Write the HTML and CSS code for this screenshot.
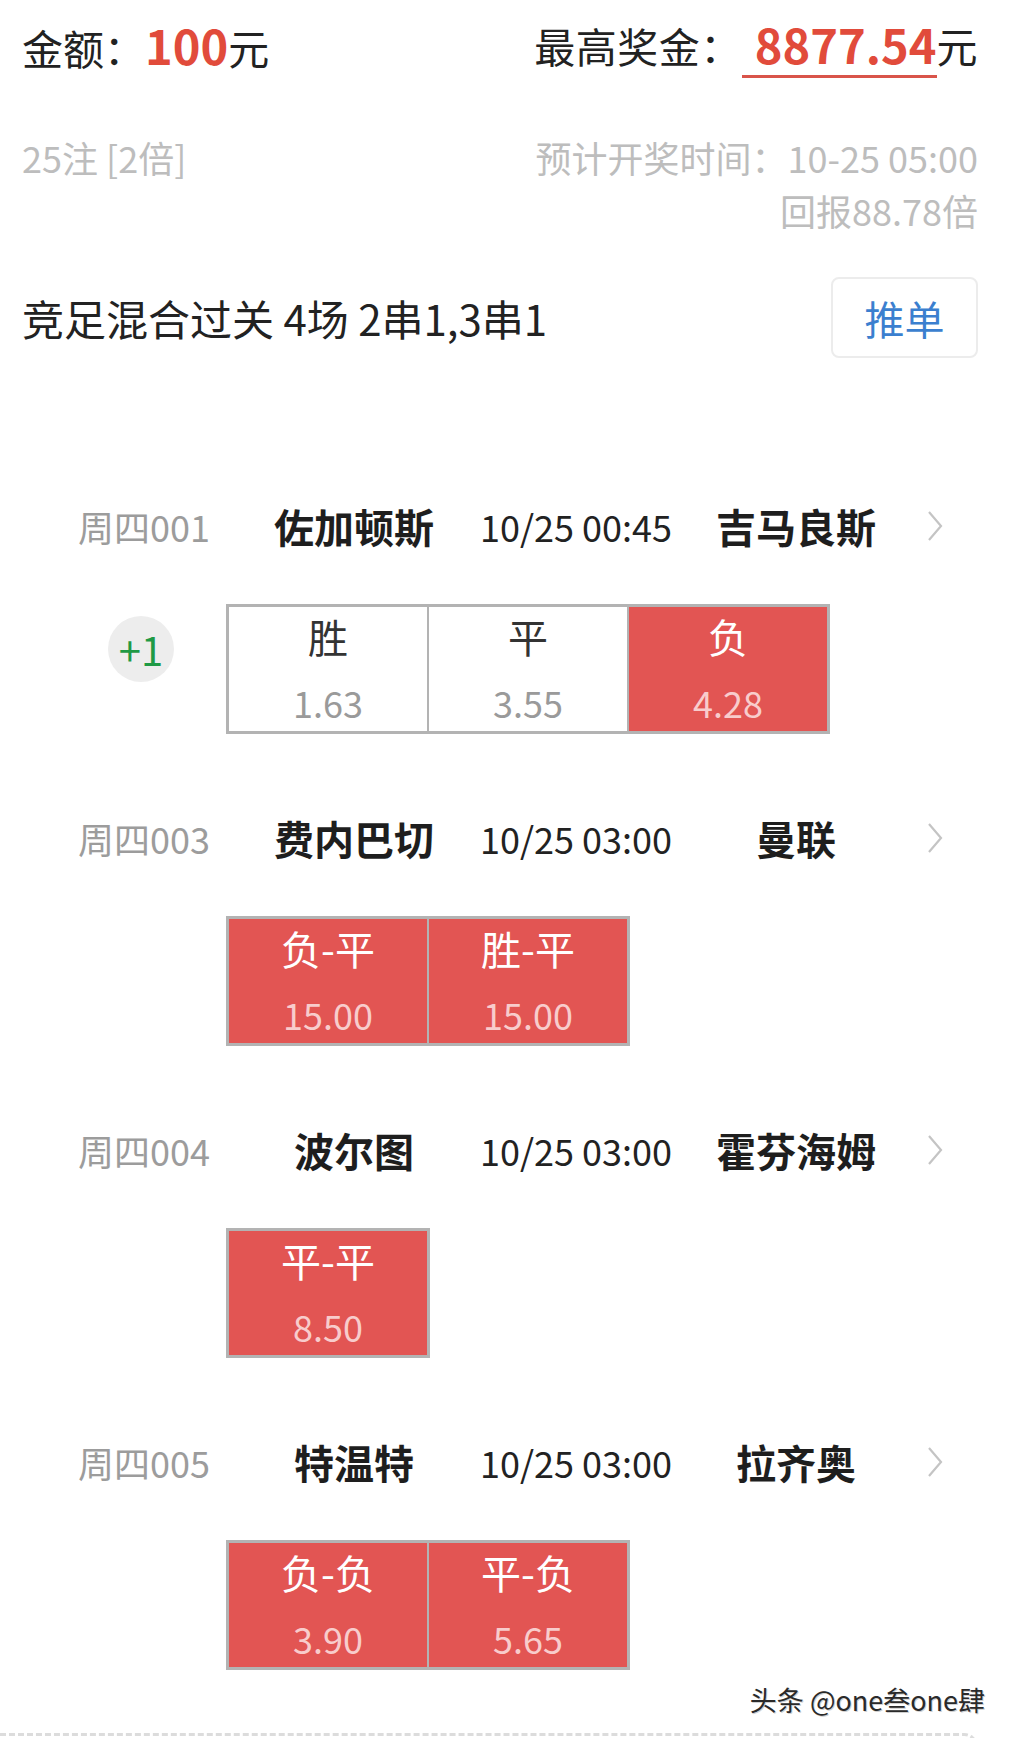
FILE: index.html
```html
<!DOCTYPE html>
<html lang="zh-CN">
  <head>
    <meta charset="UTF-8" />
    <title>方案详情</title>
    <link rel="stylesheet" href="styles.css">
  </head>
  <body>
    <!-- Summary -->
    <div class="summary">
      <div class="top-row">
        <div class="amount">金额：<span class="money">100</span>元</div>
        <div class="prize">最高奖金：<span class="prize-value">8877.54</span>元</div>
      </div>

      <div class="meta">
        <div>25注 [2倍]</div>
        <div class="meta-right">
          <div>预计开奖时间：10-25 05:00</div>
          <div>回报88.78倍</div>
        </div>
      </div>

      <div class="title-row">
        <div class="title">竞足混合过关 4场 2串1,3串1</div>
        <div class="push-btn">推单</div>
      </div>
    </div>

    <!-- Matches -->
    <div class="matches">
      <div class="match">
        <div class="match-head">
          <span class="match-no">周四001</span>
          <span class="team">佐加顿斯</span>
          <span class="kickoff">10/25 00:45</span>
          <span class="team">吉马良斯</span>
          <svg class="chevron" width="18" height="34" viewBox="0 0 18 34"><polyline points="3,3 15,17 3,31" /></svg>
        </div>
        <div class="pick-row">
          <div class="gutter"><span class="plus">+1</span></div>
          <div class="odds">
            <div class="cell"><div class="pick">胜</div><div class="rate">1.63</div></div>
            <div class="cell"><div class="pick">平</div><div class="rate">3.55</div></div>
            <div class="cell on"><div class="pick">负</div><div class="rate">4.28</div></div>
          </div>
        </div>
      </div>

      <div class="match">
        <div class="match-head">
          <span class="match-no">周四003</span>
          <span class="team">费内巴切</span>
          <span class="kickoff">10/25 03:00</span>
          <span class="team">曼联</span>
          <svg class="chevron" width="18" height="34" viewBox="0 0 18 34"><polyline points="3,3 15,17 3,31" /></svg>
        </div>
        <div class="pick-row">
          <div class="gutter"></div>
          <div class="odds">
            <div class="cell on"><div class="pick">负-平</div><div class="rate">15.00</div></div>
            <div class="cell on"><div class="pick">胜-平</div><div class="rate">15.00</div></div>
          </div>
        </div>
      </div>

      <div class="match">
        <div class="match-head">
          <span class="match-no">周四004</span>
          <span class="team">波尔图</span>
          <span class="kickoff">10/25 03:00</span>
          <span class="team">霍芬海姆</span>
          <svg class="chevron" width="18" height="34" viewBox="0 0 18 34"><polyline points="3,3 15,17 3,31" /></svg>
        </div>
        <div class="pick-row">
          <div class="gutter"></div>
          <div class="odds">
            <div class="cell on"><div class="pick">平-平</div><div class="rate">8.50</div></div>
          </div>
        </div>
      </div>

      <div class="match">
        <div class="match-head">
          <span class="match-no">周四005</span>
          <span class="team">特温特</span>
          <span class="kickoff">10/25 03:00</span>
          <span class="team">拉齐奥</span>
          <svg class="chevron" width="18" height="34" viewBox="0 0 18 34"><polyline points="3,3 15,17 3,31" /></svg>
        </div>
        <div class="pick-row">
          <div class="gutter"></div>
          <div class="odds">
            <div class="cell on"><div class="pick">负-负</div><div class="rate">3.90</div></div>
            <div class="cell on"><div class="pick">平-负</div><div class="rate">5.65</div></div>
          </div>
        </div>
      </div>
    </div>

    <div class="watermark">头条 @one叁one肆</div>
    <div class="next-card"></div>
  </body>
</html>
```

FILE: styles.css
```css
body {
  margin: 0;
  background: #fff;
  color: #222;
  font-family: "Noto Sans CJK SC", "Noto Sans", sans-serif;
  overflow: hidden;
}

.summary {
  padding: 17px 31px 0 22px;
}

.top-row {
  display: flex;
  justify-content: space-between;
  height: 59px;
  font-size: 41px;
  line-height: 56px;
  color: #222;
}

.money {
  color: #e14b3b;
  font-size: 47px;
  font-weight: 700;
}

.prize {
  letter-spacing: 0.5px;
}

.prize-value {
  display: inline-block;
  color: #e14b3b;
  font-size: 47px;
  font-weight: 700;
  letter-spacing: 0;
  line-height: 44px;
  padding: 0 0 9px 13px;
  border-bottom: 3px solid #d9544a;
  vertical-align: top;
  margin-top: 5px;
}

.meta {
  display: flex;
  justify-content: space-between;
  margin-top: 55px;
  font-size: 36px;
  line-height: 53px;
  color: #bdbdbd;
}

.meta-right {
  text-align: right;
}

.title-row {
  display: flex;
  justify-content: space-between;
  align-items: center;
  margin-top: 40px;
  height: 81px;
}

.title {
  font-size: 42px;
  color: #222;
}

.push-btn {
  width: 143px;
  height: 77px;
  border: 2px solid #ececec;
  border-radius: 8px;
  display: flex;
  align-items: center;
  justify-content: center;
  font-size: 40px;
  color: #3b7fcf;
}

.matches {
  margin-top: 139px;
}

.match + .match {
  margin-top: 75px;
}

.match-head {
  display: grid;
  grid-template-columns: 150px 252px 190px 252px 30px;
  align-items: center;
  height: 54px;
  padding: 0 0 6px 78px;
  white-space: nowrap;
}

.match-no {
  font-size: 36px;
  color: #9c9c9c;
}

.team {
  text-align: center;
  font-size: 40px;
  font-weight: 700;
  color: #1e1e1e;
}

.kickoff {
  text-align: center;
  font-size: 36px;
  color: #222;
}

.chevron {
  margin-left: 4px;
  fill: none;
  stroke: #c4c4c4;
  stroke-width: 2.2;
}

.pick-row {
  display: flex;
  align-items: flex-start;
  margin-top: 47px;
}

.gutter {
  width: 226px;
  flex: none;
}

.plus {
  display: flex;
  align-items: center;
  justify-content: center;
  width: 66px;
  height: 66px;
  margin: 12px 0 0 108px;
  border-radius: 50%;
  background: #ededed;
  color: #1f9a45;
  font-size: 40px;
}

.odds {
  display: flex;
  border: 3px solid #b3b3b3;
}

.cell {
  width: 198px;
  height: 119px;
  padding-top: 5px;
  text-align: center;
  background: #fff;
}

.cell + .cell {
  border-left: 2px solid #b3b3b3;
}

.pick {
  font-size: 40px;
  line-height: 48px;
  color: #333;
}

.rate {
  margin-top: 20px;
  font-size: 36px;
  line-height: 44px;
  color: #9a9a9a;
}

.cell.on {
  background: #e25553;
}

.cell.on .pick {
  color: #fff;
}

.cell.on .rate {
  color: #f8cccc;
}

.watermark {
  margin-top: 12px;
  padding-right: 24px;
  text-align: right;
  font-size: 27px;
  line-height: 36px;
  color: #2a2a2a;
  text-shadow: 1px 1px 0 #d0d0d0, -1px 0 0 #fff;
}

.next-card {
  margin: 15px 31px 0 0;
  height: 40px;
  border-top: 3px dashed #dcdcdc;
  border-right: 3px dashed #dcdcdc;
  border-top-right-radius: 14px;
}
```
